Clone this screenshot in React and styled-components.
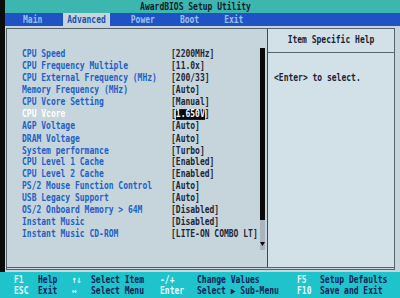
import React from 'react';
import styled, { createGlobalStyle } from 'styled-components';

const GlobalStyle = createGlobalStyle`
    html, body {
        margin:0;
        padding:0;
        background:#0c0c0c;
    }
    body {
        font-family:"DejaVu Sans Mono", "Liberation Mono", monospace;
    }
`;

export const Screen = styled.div`
    width:400px;
    height:298px;
    display:flex;
    flex-direction:column;
    overflow:hidden;
    font-size:8px;
    font-weight:bold;
`;

export const Upper = styled.div`
    display:flex;
    height:272px;
    padding-left:5px;
    background:#0c0c0c;
`;

export const Content = styled.div`
    flex:1;
    display:flex;
    flex-direction:column;
`;

export const TitleBar = styled.div`
    height:13px;
    display:flex;
    align-items:center;
    justify-content:center;
    padding-right:14px;
    background:#3db6b0;
    color:#0d1c2a;
    span {
        display:inline-block;
        transform:scaleY(1.2);
    }
`;

export const TabBar = styled.div`
    height:13px;
    display:flex;
    align-items:stretch;
    gap:17px;
    padding-left:14px;
    background:#1f52c4;
`;

export const Tab = styled.div`
    display:flex;
    align-items:center;
    padding:0 4px;
    background:${p => (p.$active ? '#c8d6dc' : 'transparent')};
    color:${p => (p.$active ? '#1d4fb4' : '#9cc0ee')};
    span {
        display:inline-block;
        transform:scaleY(1.2);
    }
`;

export const Body = styled.div`
    flex:1;
    display:flex;
    padding:2px 5px 2px 1px;
    background:#c6d5db;
`;

export const Frame = styled.div`
    flex:1;
    display:grid;
    grid-template-columns:1fr 127px;
    border:1px solid #56646c;
    border-bottom:3px double #56646c;
`;

export const LeftPane = styled.div`
    display:flex;
    background:#c6d5db;
`;

export const List = styled.div`
    flex:1;
    display:flex;
    flex-direction:column;
    padding:20px 0 0 15px;
`;

export const Row = styled.div`
    height:11.9px;
    display:grid;
    grid-template-columns:149px auto;
    align-items:center;
    white-space:nowrap;
`;

export const Label = styled.span`
    display:inline-block;
    transform:scaleY(1.2);
    color:${p => (p.$current ? '#ffffff' : '#1f5fc8')};
`;

export const Value = styled.span`
    display:inline-block;
    transform:scaleY(1.2);
    color:#1e2636;
`;

export const Picked = styled.span`
    background:#0a0a0a;
    color:#ffffff;
`;

export const ScrollTrack = styled.div`
    width:5px;
    margin:19px 2px 0 0;
    height:202px;
    display:flex;
    flex-direction:column;
    background:#a9b4bc;
`;

export const ScrollThumb = styled.div`
    height:172px;
    background:#0a0a0a;
`;

export const ScrollArrow = styled.div`
    margin-top:auto;
    margin-bottom:4px;
    display:flex;
    justify-content:center;
    svg {
        display:block;
    }
`;

export const RightPane = styled.div`
    display:flex;
    flex-direction:column;
    border-left:1px solid #3e4a52;
    background:#d2e1e8;
`;

export const HelpHeader = styled.div`
    height:23px;
    display:flex;
    align-items:center;
    justify-content:center;
    border-bottom:1px solid #56646c;
    color:#1b2232;
    span {
        display:inline-block;
        transform:scaleY(1.2);
    }
`;

export const HelpBody = styled.div`
    padding:21px 0 0 6px;
    color:#1b2232;
    span {
        display:inline-block;
        transform:scaleY(1.2);
    }
`;

export const Footer = styled.div`
    flex:1;
    display:grid;
    grid-template-columns:24px 34px 19px 69px 37px 100px 23px auto;
    grid-auto-rows:11px;
    align-content:start;
    padding:4px 0 0 14px;
    background:#1fc3cb;
    white-space:nowrap;
`;

export const Key = styled.span`
    display:inline-block;
    transform:scaleY(1.2);
    color:#e6fbff;
`;

export const Hint = styled.span`
    display:inline-block;
    transform:scaleY(1.2);
    color:#0e2158;
`;

const items = [
    ['CPU Speed', '[2200MHz]'],
    ['CPU Frequency Multiple', '[11.0x]'],
    ['CPU External Frequency (MHz)', '[200/33]'],
    ['Memory Frequency (MHz)', '[Auto]'],
    ['CPU Vcore Setting', '[Manual]'],
    ['CPU Vcore', null],
    ['AGP Voltage', '[Auto]'],
    ['DRAM Voltage', '[Auto]'],
    ['System performance', '[Turbo]'],
    ['CPU Level 1 Cache', '[Enabled]'],
    ['CPU Level 2 Cache', '[Enabled]'],
    ['PS/2 Mouse Function Control', '[Auto]'],
    ['USB Legacy Support', '[Auto]'],
    ['OS/2 Onboard Memory > 64M', '[Disabled]'],
    ['Instant Music', '[Disabled]'],
    ['Instant Music CD-ROM', '[LITE-ON COMBO LT]'],
];

const tabs = ['Main', 'Advanced', 'Power', 'Boot', 'Exit'];

const keys = [
    ['F1', 'Help', '↑↓', 'Select Item', '-/+', 'Change Values', 'F5', 'Setup Defaults'],
    ['ESC', 'Exit', '↔', 'Select Menu', 'Enter', 'Select ▶ Sub-Menu', 'F10', 'Save and Exit'],
];

export default function App() {
    return (
        <>
            <GlobalStyle />
            <Screen>
                <Upper>
                    <Content>
                        <TitleBar><span>AwardBIOS Setup Utility</span></TitleBar>
                        <TabBar>
                            {tabs.map(t => (
                                <Tab key={t} $active={t === 'Advanced'}><span>{t}</span></Tab>
                            ))}
                        </TabBar>
                        <Body>
                            <Frame>
                                <LeftPane>
                                    <List>
                                        {items.map(([label, value]) => (
                                            <Row key={label}>
                                                <Label $current={value === null}>{label}</Label>
                                                {value === null
                                                    ? <Value>[<Picked>1.650V</Picked>]</Value>
                                                    : <Value>{value}</Value>}
                                            </Row>
                                        ))}
                                    </List>
                                    <ScrollTrack>
                                        <ScrollThumb />
                                        <ScrollArrow>
                                            <svg width="5" height="4" viewBox="0 0 5 4">
                                                <path d="M0 0 L5 0 L2.5 4 Z" fill="#0a0a0a" />
                                            </svg>
                                        </ScrollArrow>
                                    </ScrollTrack>
                                </LeftPane>
                                <RightPane>
                                    <HelpHeader><span>Item Specific Help</span></HelpHeader>
                                    <HelpBody><span>&lt;Enter&gt; to select.</span></HelpBody>
                                </RightPane>
                            </Frame>
                        </Body>
                    </Content>
                </Upper>
                <Footer>
                    {keys.map(row => row.map((cell, i) => (
                        i % 2 === 0
                            ? <Key key={cell}>{cell}</Key>
                            : <Hint key={cell}>{cell}</Hint>
                    )))}
                </Footer>
            </Screen>
        </>
    );
}
